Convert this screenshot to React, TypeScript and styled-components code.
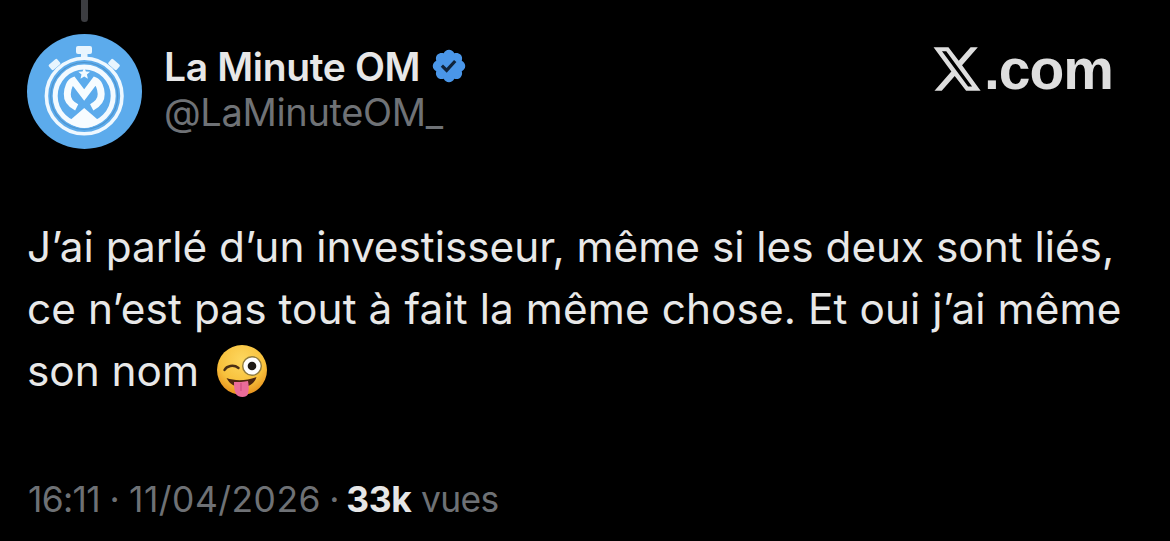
import React from "react";
import styled, { createGlobalStyle } from "styled-components";

const Global = createGlobalStyle`
  html, body { margin: 0; padding: 0; background: #000; }
  #root { width: 1170px; height: 541px; overflow: hidden; }
`;

const Page = styled.main`
  width: 1170px;
  height: 541px;
  box-sizing: border-box;
  background: #000;
  display: flex;
  flex-direction: column;
  padding: 0 0 0 28px;
  font-family: Inter, "Liberation Sans", sans-serif;
`;

const ThreadLine = styled.div`
  width: 7px;
  height: 22px;
  margin-left: 53px;
  border-radius: 0 0 4px 4px;
  background: #3c3d41;
`;

const Header = styled.header`
  display: flex;
  align-items: flex-start;
  margin-top: 12px;
  height: 115px;
`;

const AvatarWrap = styled.div`
  width: 115px;
  height: 115px;
  margin-left: -1px;
  flex: none;
`;

const Identity = styled.div`
  display: flex;
  flex-direction: column;
  margin-left: 22px;
  padding-top: 9px;
`;

const NameRow = styled.div`
  display: flex;
  align-items: center;
  gap: 10px;
  height: 46px;
`;

const Name = styled.span`
  font-size: 39px;
  font-weight: 600;
  letter-spacing: -0.35px;
  color: #e7e7e7;
`;

const Handle = styled.span`
  font-size: 38px;
  font-weight: 400;
  line-height: 46px;
  letter-spacing: -0.35px;
  color: #6f7276;
`;

const Brand = styled.div`
  margin-left: auto;
  margin-right: 57px;
  margin-top: 5px;
  display: flex;
  align-items: baseline;
  color: #dedede;
`;

const BrandText = styled.span`
  font-size: 57px;
  font-weight: 700;
  letter-spacing: -1px;
  line-height: 60px;
  font-family: "Liberation Sans", Inter, sans-serif;
`;

const Body = styled.p`
  margin: 67px 0 0 -1px;
  width: 1130px;
  font-size: 42.3px;
  line-height: 62px;
  font-weight: 400;
  color: #e8e8e8;
`;

const Line = styled.span<{ $tracking?: number }>`
  display: flex;
  align-items: center;
  height: 62px;
  white-space: pre;
  letter-spacing: ${(p) => p.$tracking ?? 0}px;
`;

const EmojiWrap = styled.span`
  display: inline-flex;
  margin-left: 17px;
`;

const Meta = styled.footer`
  margin-top: 76px;
  display: flex;
  align-items: baseline;
  font-size: 35.4px;
  line-height: 44px;
  color: #6e7175;
  white-space: pre;
`;

const MetaPart = styled.span<{ $tracking: number }>`
  letter-spacing: ${(p) => p.$tracking}px;
`;

const Strong = styled.strong`
  font-weight: 700;
  letter-spacing: -0.3px;
  color: #e6e6e6;
`;

const Avatar = () => (
  <svg width="115" height="115" viewBox="0 0 115 115">
    <circle cx="57.5" cy="57.500" r="57.500" fill="#5cabec" />
    <g fill="#e8f5fe">
      <rect x="49" y="12" width="16" height="8" rx="2" />
      <rect x="54" y="19" width="6.500" height="5" />
      <rect x="22" y="27" width="11" height="7" rx="1.500" transform="rotate(-40 27.500 30.500)" />
      <rect x="81.500" y="27" width="11" height="7" rx="1.500" transform="rotate(40 87 30.500)" />
    </g>
    <circle cx="57.200" cy="62" r="37.800" fill="none" stroke="#eef8ff" strokeWidth="3.600" />
    <circle cx="57.200" cy="62" r="29" fill="none" stroke="#f3faff" strokeWidth="5" />
    <circle cx="57.200" cy="62" r="33.500" fill="none" stroke="#4f94cc" strokeWidth="1.200" />
    <path d="M57.200 33.500l1.700 3.900 4.200.4-3.200 2.800 1 4.100-3.700-2.200-3.700 2.200 1-4.100-3.200-2.800 4.200-.4z" fill="#f3faff" />
    <path
      d="M49.700 73.300C43 70 40 66 40.300 60 40.500 54 43 48 46.300 46.700L57.200 61 68 46.700C71.500 48 74 54 74.200 60 74.400 66 71 70 64.700 73.300"
      fill="none"
      stroke="#f7fcff"
      strokeWidth="7"
    />
    <path d="M57.200 74L73.500 88Q57.200 100 41 88Z" fill="#f7fcff" />
  </svg>
);

const Verified = () => (
  <svg width="38" height="38" viewBox="0 0 24 24" style={{ flex: "none" }}>
    <path
      fill="#4a96e8"
      d="M22.25 12c0-1.430-.88-2.670-2.190-3.340.46-1.390.2-2.900-.81-3.910s-2.520-1.270-3.910-.81c-.66-1.310-1.910-2.190-3.340-2.190s-2.670.88-3.330 2.190c-1.400-.46-2.910-.2-3.920.81s-1.260 2.520-.8 3.910c-1.310.67-2.200 1.910-2.200 3.340s.89 2.670 2.200 3.340c-.46 1.390-.21 2.900.8 3.910s2.520 1.260 3.910.81c.67 1.310 1.910 2.190 3.340 2.190s2.680-.88 3.340-2.190c1.390.45 2.900.2 3.910-.81s1.270-2.520.81-3.910c1.310-.67 2.190-1.910 2.190-3.340z"
    />
    <path fill="#10233a" d="M10.540 16.200l-3.740-3.740 1.410-1.410 2.260 2.260 4.720-5.150 1.470 1.350z" />
  </svg>
);

const XMark = () => (
  <svg width="54" height="48" viewBox="0 0 24 22" style={{ alignSelf: "center" }}>
    <path
      fill="#dedede"
      d="M18.244 1h3.308l-7.227 8.26L22.827 21h-6.657l-5.214-6.817L4.990 21H1.680l7.730-8.835L1.254 1h6.826l4.713 6.231zm-1.161 18h1.833L7.084 2.860H5.117z"
    />
  </svg>
);

const WinkEmoji = () => (
  <svg width="52" height="54" viewBox="0 0 52 54">
    <defs>
      <radialGradient id="face" cx="50%" cy="30%" r="70%">
        <stop offset="0%" stopColor="#fdd75f" />
        <stop offset="65%" stopColor="#f8c13c" />
        <stop offset="100%" stopColor="#e8921e" />
      </radialGradient>
    </defs>
    <circle cx="26" cy="26" r="25" fill="url(#face)" />
    <circle cx="36" cy="22" r="9.300" fill="#fff" stroke="#8f7a3c" strokeWidth="1.400" />
    <circle cx="36" cy="22" r="4.300" fill="#1f1a16" />
    <path d="M8.500 26c2-4 9-6 14-2" fill="none" stroke="#4a2f14" strokeWidth="2.400" strokeLinecap="round" />
    <path d="M10.500 34c8 3 20 3 30-1-2 7-8 10-15 10-7 0-12-3-15-9z" fill="#4a2410" />
    <path d="M18 38c4 0 10 0 14-1 1 5 1 9 0 13-1 4-10 4-12 0-2-4-2-8-2-12z" fill="#ea6c9a" />
    <path d="M25 39v8" stroke="#c9497c" strokeWidth="1" fill="none" />
  </svg>
);

export default function App() {
  return (
    <Page>
      <Global />
      <ThreadLine />
      <Header>
        <AvatarWrap>
          <Avatar />
        </AvatarWrap>
        <Identity>
          <NameRow>
            <Name>La Minute OM</Name>
            <Verified />
          </NameRow>
          <Handle>@LaMinuteOM_</Handle>
        </Identity>
        <Brand>
          <XMark />
          <BrandText>.com</BrandText>
        </Brand>
      </Header>
      <Body>
        <Line>J’ai parlé d’un investisseur, même si les deux sont liés,</Line>
        <Line $tracking={0.1}>ce n’est pas tout à fait la même chose. Et oui j’ai même</Line>
        <Line>
          son nom
          <EmojiWrap>
            <WinkEmoji />
          </EmojiWrap>
        </Line>
      </Body>
      <Meta>
        <MetaPart $tracking={-0.7}>16:11</MetaPart>
        <MetaPart $tracking={-0.3}> · </MetaPart>
        <MetaPart $tracking={0.5}>11/04/2026</MetaPart>
        <MetaPart $tracking={-1.6}> · </MetaPart>
        <Strong>33k</Strong>
        <MetaPart $tracking={-0.6}> vues</MetaPart>
      </Meta>
    </Page>
  );
}
